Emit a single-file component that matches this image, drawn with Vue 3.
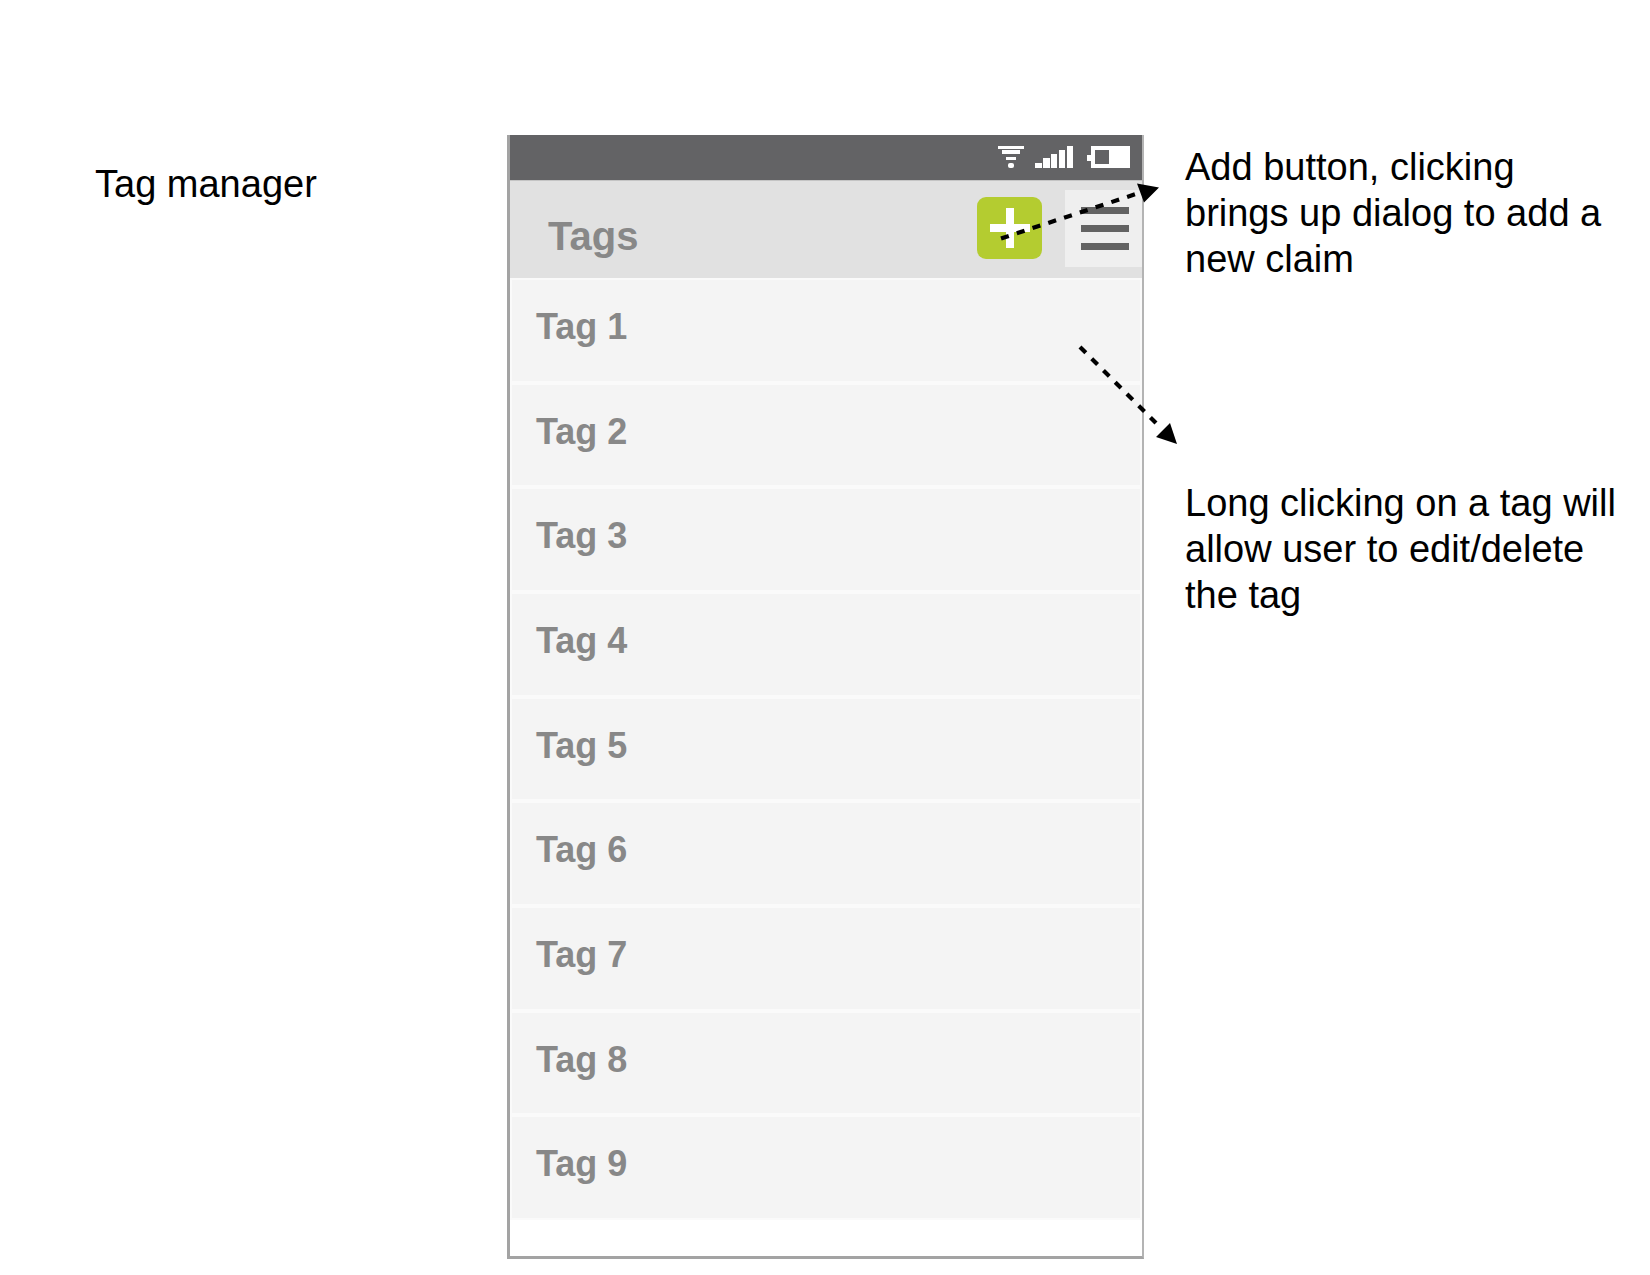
<script setup>
const tags = Array.from({ length: 9 }, (_, i) => `Tag ${i + 1}`)
</script>

<template>
  <main class="board">
    <h1 class="title">Tag manager</h1>

    <section class="phone">
      <div class="status">
        <svg width="134" height="24" viewBox="0 0 134 24" fill="#fff" aria-hidden="true">
          <path d="M0 1h26v3H0zM4 5h18v4H4zM8 12h10v3H8z" />
          <rect x="10" y="18" width="6" height="5" rx="2" />
          <path d="M37 18h7v5h-7zM45 13h7v10h-7zM53 9h6v14h-6zM61 5h6v18h-6zM69 1h6v22h-6z" />
          <path fill-rule="evenodd" d="M93 1h39v22H93v-7h-4v-6h4zM97 5v14h14V5z" />
        </svg>
      </div>

      <header class="bar">
        <h2>Tags</h2>
        <button class="add" type="button" aria-label="Add tag">
          <svg width="40" height="40" viewBox="0 0 40 40" aria-hidden="true">
            <path d="M16 0h8v16h16v8H24v16h-8V24H0v-8h16z" fill="#fff" />
          </svg>
        </button>
        <button class="menu" type="button" aria-label="Menu">
          <svg width="48" height="43" viewBox="0 0 48 43" aria-hidden="true">
            <path d="M0 0h48v7H0zM0 18h48v7H0zM0 36h48v7H0z" fill="#636363" />
          </svg>
        </button>
      </header>

      <ul class="tags">
        <li v-for="tag in tags" :key="tag">
          <button type="button">{{ tag }}</button>
        </li>
      </ul>

      <svg class="arrows" width="200" height="280" viewBox="0 0 200 280" aria-hidden="true">
        <g stroke="#000" stroke-width="4.2" stroke-dasharray="8.2 8.4" fill="none">
          <path d="M21 63.5L156 19" />
          <path d="M100 172L176 248" />
        </g>
        <path d="M157 8.500L179 12.500L164 27.500ZM190 248L176 262L197 269Z" />
      </svg>
    </section>

    <aside class="notes">
      <p>Add button, clicking brings up dialog to add a new claim</p>
      <p>Long clicking on a tag will allow user to edit/delete the tag</p>
    </aside>
  </main>
</template>

<style>
body {
  margin: 0;
  background: #fff;
}
</style>

<style scoped>
.board {
  display: grid;
  grid-template-columns: 507fr 637fr 506fr;
  align-items: start;
  padding: 135px 0 16px;
  font-family: "Liberation Sans", Arial, sans-serif;
  font-size: 38px;
  line-height: 46px;
  color: #000;
}

.title {
  margin: 26px 0 0 95px;
  font: inherit;
}

.phone {
  position: relative;
  border: solid #a3a3a3;
  border-width: 0 2px 3px 3px;
  border-right-color: #b4b4b4;
  padding-bottom: 36px;
}

.status {
  display: flex;
  justify-content: flex-end;
  height: 45px;
  padding: 10px 10px 0 0;
  box-sizing: border-box;
  background: #636365;
}

.bar {
  display: flex;
  align-items: flex-start;
  height: 98px;
  box-sizing: border-box;
  padding: 9px 0 0 38px;
  border-top: 1px solid #c4c4c4;
  background: #e1e1e1;
}

.bar h2 {
  flex: 1;
  margin: 23px 0 0;
  font-size: 40px;
  line-height: 46px;
  color: #888;
}

button {
  border: 0;
  padding: 0;
  font: inherit;
  color: inherit;
  cursor: pointer;
}

.add,
.menu {
  display: flex;
  align-items: center;
  justify-content: center;
}

.add {
  width: 65px;
  height: 62px;
  margin: 7px 23px 0 0;
  border-radius: 9px;
  background: #b4cc30;
}

.menu {
  width: 77px;
  height: 77px;
  padding-left: 2px;
  background: #efefef;
}

.tags {
  display: flex;
  flex-direction: column;
  min-height: 942px;
  margin: 0;
  padding: 0;
  list-style: none;
}

.tags li {
  display: flex;
  flex: 1;
}

.tags button {
  flex: 1;
  padding: 0 0 7px 24px;
  border: 2px solid #fafafa;
  background: #f4f4f4;
  color: #888;
  font-size: 36px;
  font-weight: bold;
  text-align: left;
}

.arrows {
  position: absolute;
  top: 40px;
  right: -38px;
}

.notes {
  display: flex;
  flex-direction: column;
  gap: 198px;
  padding: 9px 30px 0 41px;
}

.notes p {
  margin: 0;
}
</style>
